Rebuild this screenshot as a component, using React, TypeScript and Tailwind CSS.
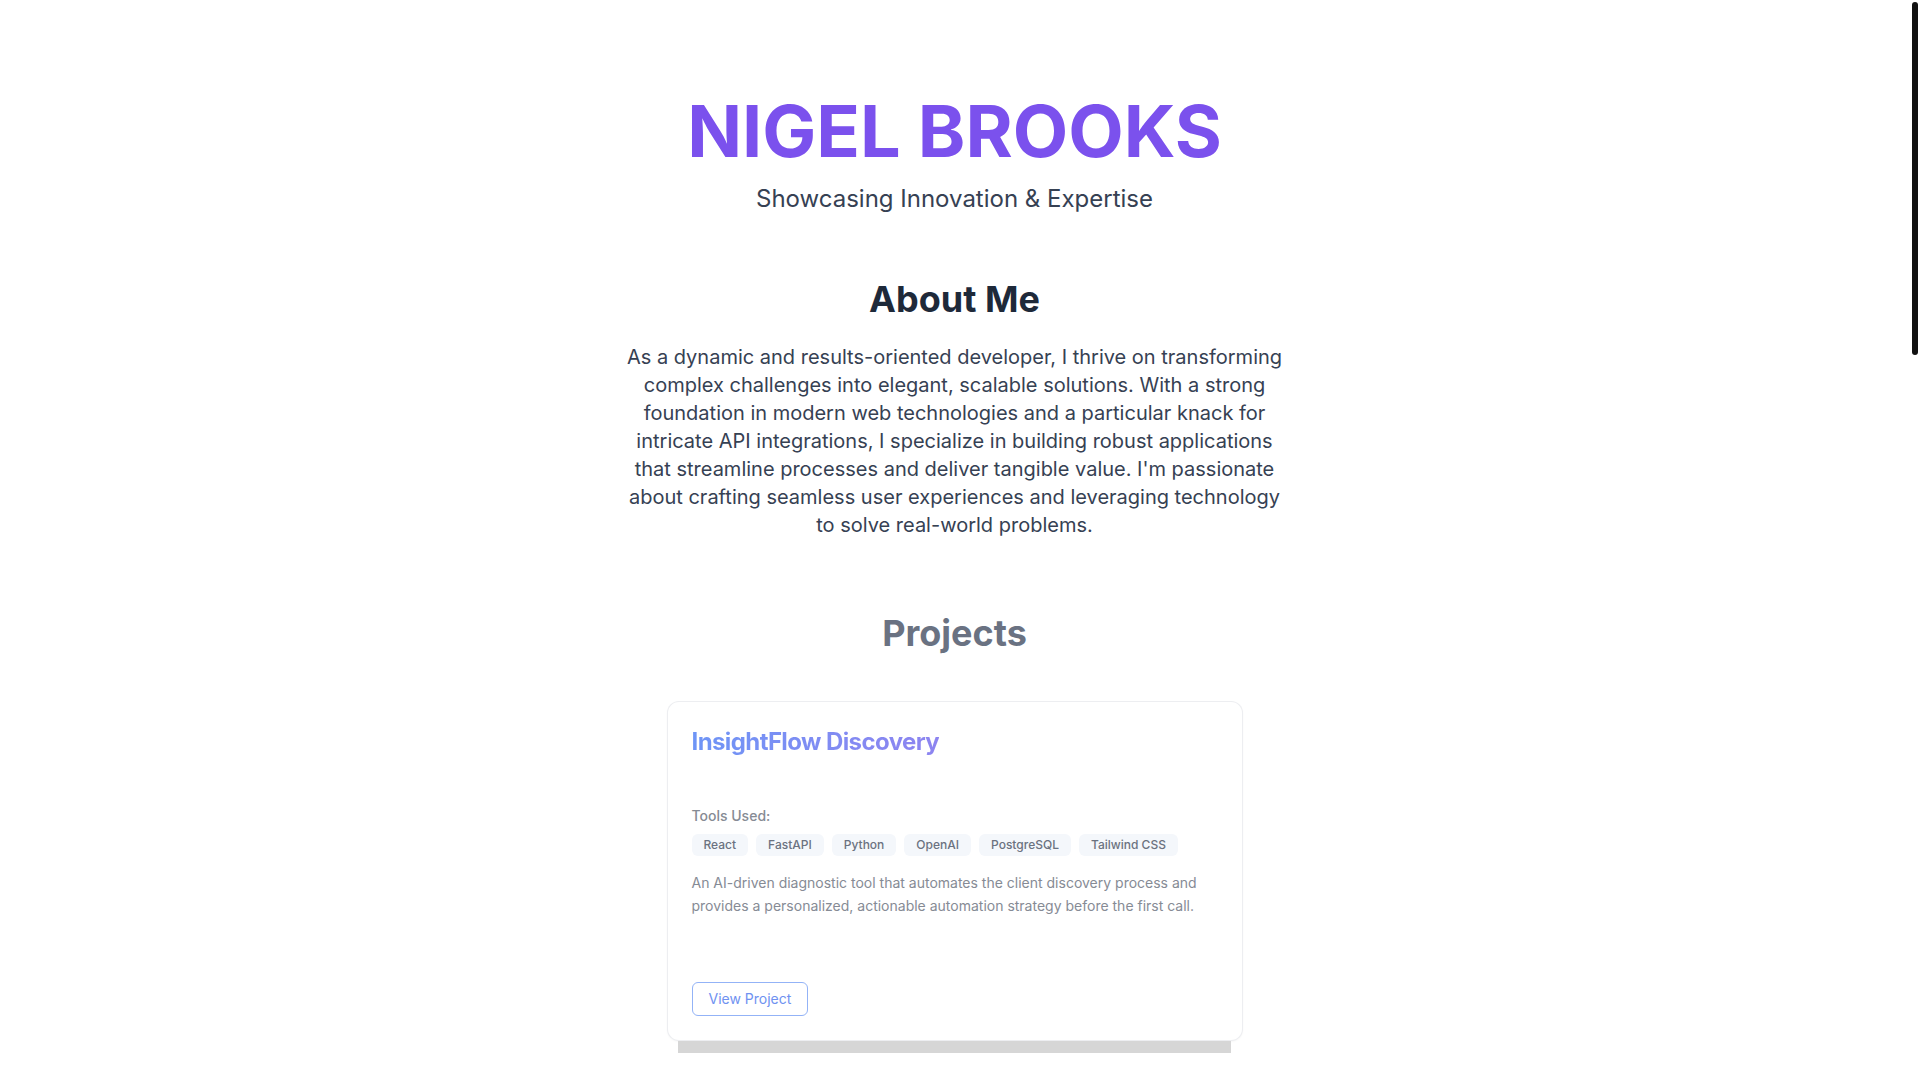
const tools = ["React", "FastAPI", "Python", "OpenAI", "PostgreSQL", "Tailwind CSS"];

function ProjectCard() {
  return (
    <div className="w-full max-w-xl">
      <div className="flex flex-col rounded-xl border border-gray-200/70 bg-white p-6 shadow-[0_1px_2px_rgba(0,0,0,0.03)]">
        <h3 className="w-fit bg-gradient-to-r from-[#6e95f6] to-[#8d84f0] bg-clip-text text-2xl font-bold tracking-tight text-transparent">
          InsightFlow Discovery
        </h3>

        <p className="mt-12 text-sm font-medium text-[#868b94]">Tools Used:</p>
        <div className="mt-2 flex flex-wrap gap-2">
          {tools.map(t => (
            <span
              key={t}
              className="rounded-md bg-[#f4f7fb] px-3 py-[3px] text-xs font-medium text-[#6b7280]"
            >
              {t}
            </span>
          ))}
        </div>

        <p className="mt-4 text-sm leading-relaxed text-[#868b95]">
          An AI-driven diagnostic tool that automates the client discovery process and provides a
          personalized, actionable automation strategy before the first call.
        </p>

        <div className="mt-16">
          <button className="rounded-md border border-[#93b3f7] bg-white px-4 py-1.5 text-sm text-[#6f92f1]">
            View Project
          </button>
        </div>
      </div>
      {/* barra de scroll horizontal del carrusel */}
      <div className="mx-auto h-[12px] w-[553px] bg-[#d6d6d6]" />
    </div>
  );
}

export default function App() {
  return (
    <div className="flex h-screen overflow-hidden bg-white font-[Inter,sans-serif]">
      <main className="min-w-0 flex-1 px-4">
        {/* Hero */}
        <header className="flex flex-col items-center pt-[95px] text-center">
          <h1 className="text-7xl font-bold text-[#7b51ed]">NIGEL BROOKS</h1>
          <p className="mt-4 text-2xl text-gray-700">Showcasing Innovation &amp; Expertise</p>
        </header>

        {/* About */}
        <section className="mt-16 flex flex-col items-center text-center">
          <h2 className="text-4xl font-bold text-gray-800">About Me</h2>
          <p className="mt-6 max-w-2xl text-xl leading-7 text-gray-700">
            As a dynamic and results-oriented developer, I thrive on transforming complex challenges
            into elegant, scalable solutions. With a strong foundation in modern web technologies and a
            particular knack for intricate API integrations, I specialize in building robust
            applications that streamline processes and deliver tangible value. I'm passionate about
            crafting seamless user experiences and leveraging technology to solve real-world problems.
          </p>
        </section>

        {/* Projects */}
        <section className="mt-[74px] flex flex-col items-center">
          <h2 className="text-4xl font-bold text-gray-500">Projects</h2>
          <div className="mt-12 flex w-full justify-center">
            <ProjectCard />
          </div>
        </section>
      </main>

      {/* barra de scroll vertical */}
      <aside className="w-[11px] shrink-0 pt-[2px]">
        <div className="ml-[3px] h-[353px] w-[6px] rounded-full bg-[#111111]" />
      </aside>
    </div>
  );
}
